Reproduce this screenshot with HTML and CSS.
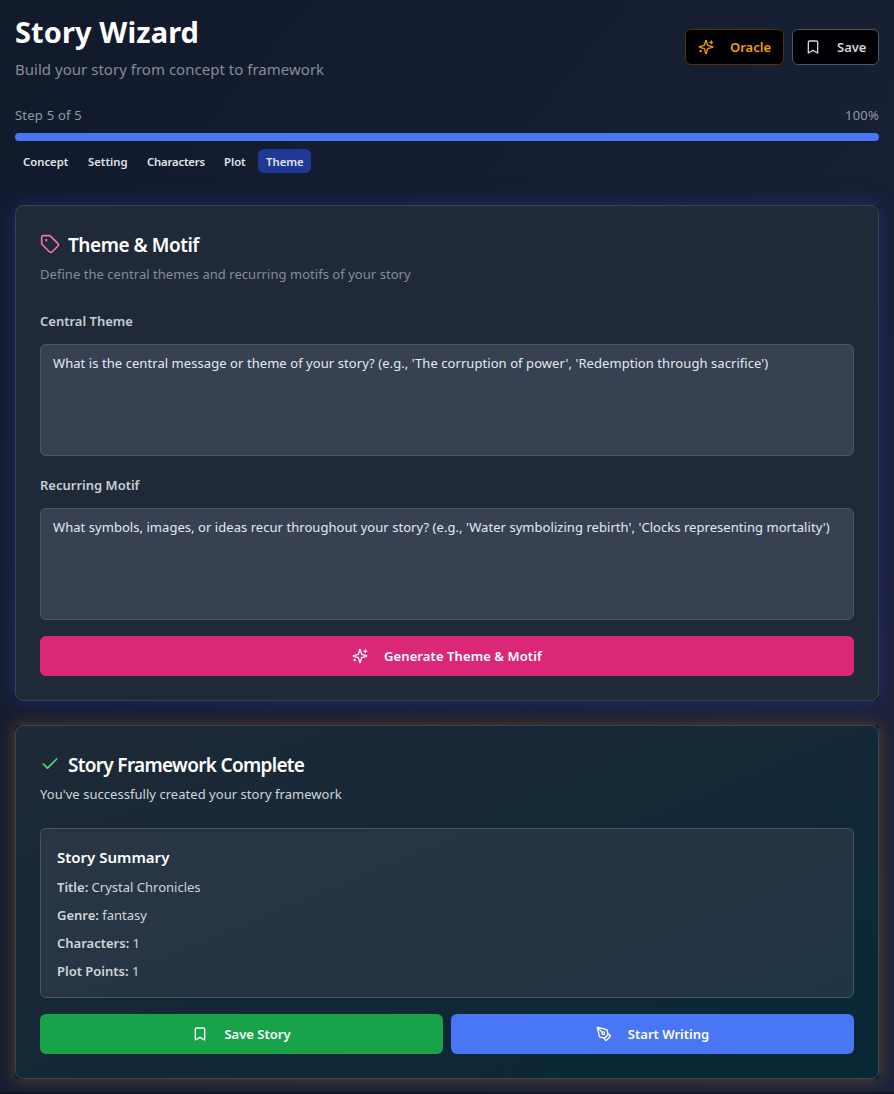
FILE: index.html
```html
<!DOCTYPE html>
<html lang="en">
<head>
<meta charset="utf-8">
<title>Story Wizard</title>
<link rel="stylesheet" href="styles.css">
</head>
<body>
<svg width="0" height="0" class="defs">
  <symbol id="sparkles" viewBox="0 0 24 24"><path d="M9.937 15.5A2 2 0 0 0 8.5 14.063l-6.135-1.582a.5.5 0 0 1 0-.962L8.5 9.936A2 2 0 0 0 9.937 8.5l1.582-6.135a.5.5 0 0 1 .963 0L14.063 8.5A2 2 0 0 0 15.5 9.937l6.135 1.581a.5.5 0 0 1 0 .964L15.5 14.063a2 2 0 0 0-1.437 1.437l-1.582 6.135a.5.5 0 0 1-.963 0z"/><path d="M20 3v4M22 5h-4M4 17v2M5 18H3"/></symbol>
  <symbol id="bookmark" viewBox="0 0 24 24"><path d="m19 21-7-4-7 4V5a2 2 0 0 1 2-2h10a2 2 0 0 1 2 2v16z"/></symbol>
  <symbol id="tag" viewBox="0 0 24 24"><path d="M12.586 2.586A2 2 0 0 0 11.172 2H4a2 2 0 0 0-2 2v7.172a2 2 0 0 0 .586 1.414l8.704 8.704a2.426 2.426 0 0 0 3.42 0l6.58-6.58a2.426 2.426 0 0 0 0-3.42z"/><circle cx="7.5" cy="7.5" r=".5" fill="currentColor"/></symbol>
  <symbol id="check" viewBox="0 0 24 24"><path d="M20 6 9 17l-5-5"/></symbol>
  <symbol id="pen" viewBox="0 0 24 24"><path d="M15.707 21.293a1 1 0 0 1-1.414 0l-1.586-1.586a1 1 0 0 1 0-1.414l5.586-5.586a1 1 0 0 1 1.414 0l1.586 1.586a1 1 0 0 1 0 1.414z"/><path d="m18 13-1.375-6.874a1 1 0 0 0-.746-.776L3.235 2.028a1 1 0 0 0-1.207 1.207L5.35 15.879a1 1 0 0 0 .776.746L13 18"/><path d="m2.3 2.3 7.286 7.286"/><circle cx="11" cy="11" r="2"/></symbol>
</svg>
<main class="page">
  <header class="header">
    <div>
      <h1 class="title">Story Wizard</h1>
      <p class="subtitle">Build your story from concept to framework</p>
    </div>
    <div class="actions">
      <button class="btn btn-oracle"><svg class="icon"><use href="#sparkles"/></svg><span>Oracle</span></button>
      <button class="btn btn-save"><svg class="icon"><use href="#bookmark"/></svg><span>Save</span></button>
    </div>
  </header>

  <section class="progress">
    <div class="progress-row"><span class="step">Step 5 of 5</span><span class="percent">100%</span></div>
    <div class="bar"></div>
    <nav class="tabs">
      <a class="tab tab-concept">Concept</a><a class="tab tab-setting">Setting</a><a class="tab tab-characters">Characters</a><a class="tab tab-plot">Plot</a><a class="tab tab-theme">Theme</a>
    </nav>
  </section>

  <div class="glow glow-indigo">
    <section class="card">
      <h2 class="card-title"><svg class="icon-lg pink"><use href="#tag"/></svg><span class="t-theme">Theme &amp; Motif</span></h2>
      <p class="card-sub"><span class="t-define">Define the central themes and recurring motifs of your story</span></p>
      <label class="label">Central Theme</label>
      <div class="area"><span class="t-area1">What is the central message or theme of your story? (e.g., 'The corruption of power', 'Redemption through sacrifice')</span></div>
      <label class="label label-next">Recurring Motif</label>
      <div class="area"><span class="t-area2">What symbols, images, or ideas recur throughout your story? (e.g., 'Water symbolizing rebirth', 'Clocks representing mortality')</span></div>
      <button class="wide pink-bg"><svg class="icon"><use href="#sparkles"/></svg><span class="t-generate">Generate Theme &amp; Motif</span></button>
    </section>
  </div>

  <div class="glow glow-amber">
    <section class="card card-done">
      <h2 class="card-title"><svg class="icon-lg green"><use href="#check"/></svg><span class="t-done">Story Framework Complete</span></h2>
      <p class="card-sub light"><span class="t-define">You've successfully created your story framework</span></p>
      <div class="summary">
        <h3 class="summary-title">Story Summary</h3>
        <p><b>Title:</b> Crystal Chronicles</p>
        <p><b>Genre:</b> fantasy</p>
        <p><b>Characters:</b> 1</p>
        <p><b>Plot Points:</b> 1</p>
      </div>
      <div class="pair">
        <button class="wide green-bg"><svg class="icon"><use href="#bookmark"/></svg><span>Save Story</span></button>
        <button class="wide blue-bg"><svg class="icon"><use href="#pen"/></svg><span>Start Writing</span></button>
      </div>
    </section>
  </div>
</main>
</body>
</html>
```

FILE: styles.css
```css
* { box-sizing: border-box; }
body {
  margin: 0;
  height: 1094px;
  overflow: hidden;
  background: #0f1624;
  color: #fff;
  font: 13px/20px "Noto Sans", "Open Sans", sans-serif;
}
h1, h2, h3, p { margin: 0; }
.defs { position: absolute; }
.page {
  height: 1092px;
  padding: 15px;
  background: linear-gradient(to bottom right, #111a2b 0%, #171f33 50%, #1d233c 100%);
}
.icon, .icon-lg {
  width: 16px;
  height: 16px;
  flex: none;
  fill: none;
  stroke: currentColor;
  stroke-width: 2;
  stroke-linecap: round;
  stroke-linejoin: round;
}
.icon-lg { width: 20px; height: 20px; }

.header { display: flex; justify-content: space-between; align-items: center; height: 64px; }
.title { font-size: 29px; line-height: 36px; font-weight: 700; letter-spacing: 0.1px; }
.subtitle { margin-top: 7px; margin-bottom: -1px; font-size: 15px; line-height: 24px; color: #858c98; letter-spacing: 0.02px; }
.actions { display: flex; gap: 8px; }
.btn {
  display: flex;
  align-items: center;
  gap: 16px;
  height: 36px;
  padding: 0 12px;
  border: 1px solid #4b5563;
  border-radius: 6px;
  background: #000003;
  color: #d1d5db;
  font: 600 13px/20px "Noto Sans", sans-serif;
}
.btn-oracle { width: 99px; border-color: #5c2c0c; color: #f59e0b; }
.btn-save { width: 87px; }

.progress { margin-top: 26px; }
.progress-row { display: flex; justify-content: space-between; color: #9299a6; }
.step { letter-spacing: 0.22px; }
.percent { letter-spacing: 0.2px; }
.bar { height: 8px; margin-top: 8px; border-radius: 4px; background: #4876f5; }
.tabs { display: flex; margin-top: 8px; }
.tab {
  height: 24px;
  margin-right: 4px;
  padding: 1px 8px 0;
  border-radius: 6px;
  font-size: 11.3px;
  line-height: 24px;
  font-weight: 600;
  color: #e0e5ee;
  white-space: nowrap;
}
.tab-concept { width: 61px; }
.tab-setting { width: 55px; }
.tab-characters { width: 73px; letter-spacing: -0.18px; }
.tab-plot { width: 38px; }
.tab-theme { width: 53px; background: #1e3a94; }

.glow { margin-top: 32px; background: #141d30; }
.glow-indigo { box-shadow: 0 0 20px rgba(67, 56, 202, 0.35); }
.glow-amber { margin-top: 24px; box-shadow: 0 0 15px rgba(180, 115, 8, 0.42); }
.card {
  height: 496px;
  padding: 24px;
  border: 1px solid #3a4252;
  border-radius: 8px;
  background: #1f2937;
}
.card-done { height: 354px; border-color: #374557; background: linear-gradient(to bottom right, #1f2937, #082735); }
.card-title { display: flex; align-items: center; gap: 8px; height: 28px; font-size: 19px; line-height: 28px; font-weight: 600; white-space: nowrap; }
.card-title span { padding-top: 2px; }
.t-theme { letter-spacing: -0.46px; }
.t-done { letter-spacing: -0.69px; }
.t-define { letter-spacing: 0.04px; }
.t-area1 { letter-spacing: 0.065px; }
.t-area2 { letter-spacing: 0.047px; }
.t-generate { letter-spacing: 0.09px; }
.card-sub { margin-top: 6px; height: 20px; color: #858d9a; white-space: nowrap; }
.light { color: #d1d5db; }
.pink { color: #f472b6; }
.green { color: #4ade80; }
.label { display: block; margin-top: 27px; font-weight: 600; color: #c8cdd5; }
.label-next { margin-top: 19px; }
.area {
  height: 112px;
  margin-top: 13px;
  padding: 8px 12px;
  border: 1px solid #4b5563;
  border-radius: 6px;
  background: #384151;
  color: #e2e8f5;
  white-space: nowrap;
}
.wide {
  display: flex;
  align-items: center;
  justify-content: center;
  gap: 16px;
  width: 100%;
  height: 40px;
  border: 0;
  border-radius: 6px;
  color: #fff;
  font: 600 13px/20px "Noto Sans", sans-serif;
}
.pink-bg { margin-top: 16px; background: #db2777; }
.green-bg { background: #18a34a; }
.blue-bg { background: #4876f5; }
.summary {
  height: 170px;
  margin-top: 24px;
  padding: 16px;
  border: 1px solid #475363;
  border-radius: 6px;
  background: rgba(55, 65, 81, 0.5);
  color: #d1d5db;
}
.summary-title { margin-bottom: 8px; font-size: 15px; line-height: 24px; font-weight: 600; color: #fff; }
.summary p { margin-bottom: 8px; }
.summary b { font-weight: 600; }
.pair { display: flex; gap: 8px; margin-top: 16px; }
```
